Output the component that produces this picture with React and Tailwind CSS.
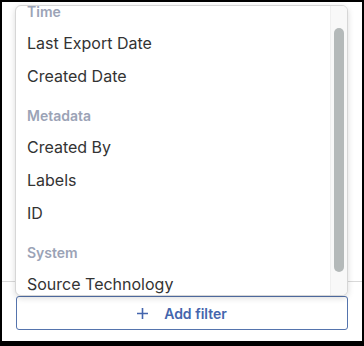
import React from 'react';

const groups = [
  { title: 'Time', items: ['Last Export Date', 'Created Date'] },
  { title: 'Metadata', items: ['Created By', 'Labels', 'ID'] },
  { title: 'System', items: ['Source Technology'] },
];

const App = () => {
  return (
    <div className="w-[364px] h-[346px] bg-black pt-[2px] pl-[2px] pr-[2px] pb-[5px] font-['Inter',sans-serif]">
      <div className="relative w-full h-full bg-white overflow-hidden">
        {/* underlying panel edge */}
        <div className="h-[280px] border-b border-[#d9d9d9]" />

        {/* add filter button */}
        <div className="absolute left-[14px] top-[294px] w-[332px]">
          <button className="w-full h-[34px] flex items-center justify-center gap-4 border border-[#5574ad] rounded-[3px] text-[14px] font-semibold text-[#4465ad]">
            <svg width="11" height="11" viewBox="0 0 11 11" fill="none" stroke="currentColor" strokeWidth="1.6">
              <path d="M5.5 0v11M0 5.5h11" />
            </svg>
            <span>Add filter</span>
          </button>
        </div>

        {/* dropdown menu */}
        <div className="absolute left-[13px] top-[3px] w-[333px] h-[291px] flex bg-white border border-[#d6d6d6] rounded-[6px] shadow-[0_2px_6px_rgba(0,0,0,0.15)] overflow-hidden">
          <div className="flex-1 overflow-hidden">
            <div className="-mt-[17px]">
              {groups.map((g) => (
                <div key={g.title}>
                  <div className="h-[38px] flex items-end pb-[5px] px-[11px] text-[14px] leading-5 font-semibold text-[#9ba3b6]">
                    {g.title}
                  </div>
                  {g.items.map((it) => (
                    <div key={it} className="h-[33px] leading-[33px] px-[11px] text-[16px] text-[#333333]">
                      {it}
                    </div>
                  ))}
                </div>
              ))}
            </div>
          </div>
          {/* scrollbar */}
          <div className="w-[17px] bg-[#f8f8f8] border-l border-[#efefef] pt-[22px] pl-[3px]">
            <div className="w-[10px] h-[244px] rounded-full bg-[#b4b9b9]" />
          </div>
        </div>
      </div>
    </div>
  );
};

export default App;
